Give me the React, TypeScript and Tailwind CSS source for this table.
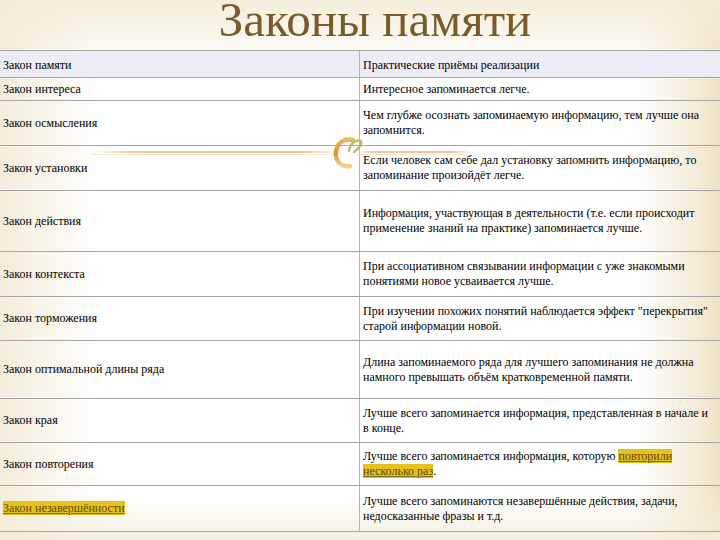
import React from 'react';

type Row = { law: React.ReactNode; text: React.ReactNode; h: string };

const link = 'bg-[#e8c21c] text-[#5e4a08] underline decoration-[#8a6a00]';

const rows: Row[] = [
    { law: 'Закон интереса', text: 'Интересное запоминается легче.', h: 'h-[23px]' },
    { law: 'Закон осмысления', text: 'Чем глубже осознать запоминаемую информацию, тем лучше она запомнится.', h: 'h-[45px]' },
    { law: 'Закон установки', text: 'Если человек сам себе дал установку запомнить информацию, то запоминание произойдёт легче.', h: 'h-[45px]' },
    { law: 'Закон действия', text: 'Информация, участвующая в деятельности (т.е. если происходит применение знаний на практике) запоминается лучше.', h: 'h-[61px]' },
    { law: 'Закон контекста', text: 'При ассоциативном связывании информации с уже знакомыми понятиями новое усваивается лучше.', h: 'h-[45px]' },
    { law: 'Закон торможения', text: 'При изучении похожих понятий наблюдается эффект "перекрытия" старой информации новой.', h: 'h-[44px]' },
    { law: 'Закон оптимальной длины ряда', text: 'Длина запоминаемого ряда для лучшего запоминания не должна намного превышать объём кратковременной памяти.', h: 'h-[58px]' },
    { law: 'Закон края', text: 'Лучше всего запоминается информация, представленная в начале и в конце.', h: 'h-[44px]' },
    {
        law: 'Закон повторения',
        text: (
            <>
                Лучше всего запоминается информация, которую <span className={link}>повторили несколько раз</span>.
            </>
        ),
        h: 'h-[43px]',
    },
    {
        law: <span className={link}>Закон незавершённости</span>,
        text: 'Лучше всего запоминаются незавершённые действия, задачи, недосказанные фразы и т.д.',
        h: 'h-[46px]',
    },
];

// decorative ornament that sits over the table
function Swirl() {
    return (
        <svg className="absolute left-0 top-[136px] pointer-events-none" width="480" height="36" viewBox="0 0 480 36">
            <defs>
                <linearGradient id="ln" x1="0" x2="1" y1="0" y2="0">
                    <stop offset="0" stopColor="#f2dcc0" stopOpacity="0" />
                    <stop offset="0.15" stopColor="#eccaa0" />
                    <stop offset="0.85" stopColor="#e9c396" />
                    <stop offset="1" stopColor="#f2dcc0" stopOpacity="0.3" />
                </linearGradient>
                <linearGradient id="sw" x1="0" x2="0" y1="0" y2="1">
                    <stop offset="0" stopColor="#eeb860" />
                    <stop offset="0.5" stopColor="#d9962a" />
                    <stop offset="1" stopColor="#f0d098" />
                </linearGradient>
            </defs>
            <rect x="92" y="15" width="246" height="2" fill="url(#ln)" />
            <rect x="92" y="18" width="246" height="1" fill="#f5e4cf" />
            <rect x="356" y="15" width="112" height="2" fill="url(#ln)" />
            <rect x="356" y="18" width="112" height="1" fill="#f5e4cf" />
            <path d="M353 4 C 341 1, 335 11, 336 20 C 337 28, 343 31, 350 30" fill="none" stroke="url(#sw)" strokeWidth="4.4" strokeLinecap="round" />
            <path d="M349 15 C 350 7, 357 3, 361 5 C 363 9, 358 13, 354 16" fill="none" stroke="#b4b45e" strokeWidth="2.4" strokeLinecap="round" opacity="0.9" />
        </svg>
    );
}

export default function App() {
    return (
        <div className="relative w-[720px] h-[540px] overflow-hidden text-black font-['Liberation_Serif','Times_New_Roman',serif] bg-[linear-gradient(180deg,rgba(243,235,214,0.9)_0%,rgba(255,255,255,0)_12%,rgba(255,255,255,0)_92%,rgba(243,236,218,0.8)_100%),linear-gradient(90deg,#f4eddb_0%,#ffffff_14%,#ffffff_88%,#f5eedb_96%,#ede3c6_100%)]">
            <div className="h-[50px] pl-[30px] text-center">
                <h1 className="h-[40px] text-[49px] leading-[40px] text-[#7b5a2b] font-normal font-['Liberation_Serif',serif]">Законы памяти</h1>
            </div>
            <div className="border-t border-[#a6a6a6] text-[12px] leading-[15px] font-['Liberation_Serif',serif]">
                <div className="flex h-[27px] border-b border-[#a6a6a6] bg-[#ebebf7]/90">
                    <div className="w-[360px] shrink-0 flex items-center pl-[3px] pt-[2px] border-r border-[#b4b4b4]">Закон памяти</div>
                    <div className="flex-1 flex items-center pl-[3px] pt-[2px]">Практические приёмы реализации</div>
                </div>
                {rows.map((r, i) => (
                    <div key={i} className={`flex border-b border-[#a6a6a6] ${r.h}`}>
                        <div className="w-[360px] shrink-0 flex items-center pl-[3px] border-r border-[#b4b4b4]">
                            <span>{r.law}</span>
                        </div>
                        <div className="flex-1 flex items-center pl-[3px] pr-[4px]">
                            <span>{r.text}</span>
                        </div>
                    </div>
                ))}
            </div>
            <Swirl />
        </div>
    );
}
